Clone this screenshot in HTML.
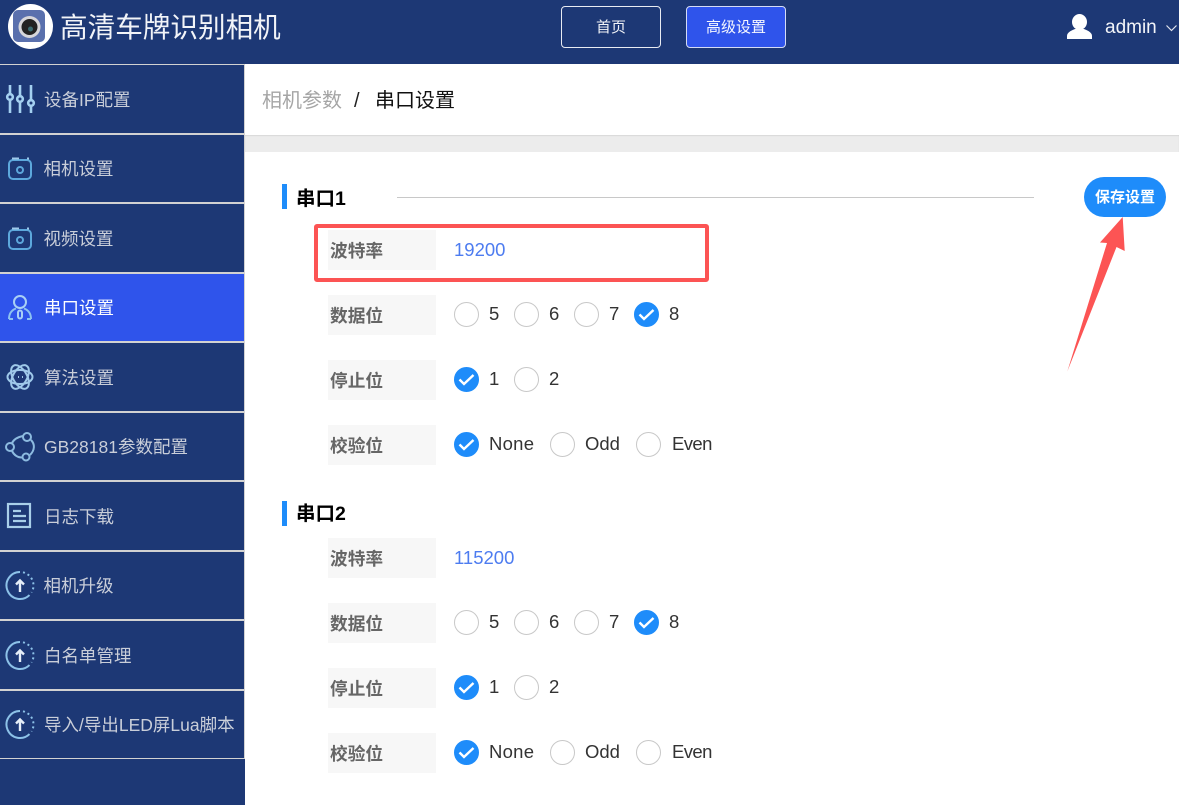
<!DOCTYPE html>
<html lang="zh"><head><meta charset="utf-8"><title>高清车牌识别相机</title>
<style>
html,body{margin:0;padding:0}
*{box-sizing:border-box}
body{width:1179px;height:805px;position:relative;overflow:hidden;background:#fff;font-family:"Liberation Sans","Noto Sans CJK SC",sans-serif}
.a{position:absolute}
.t{position:absolute;white-space:nowrap;line-height:24px}
.ln{position:absolute;left:0;width:244px;height:2px;background:#d2d2d2}
.m{position:absolute;left:44px;font-size:17.5px;line-height:24px;color:#c9ced9;white-space:nowrap}
.ic{position:absolute;left:4px;width:34px;height:34px}
.lb{position:absolute;left:328px;width:108px;height:40px;background:#f7f7f7;font-size:17.7px;font-weight:700;color:#666;line-height:42px;padding-left:2px}
.r{position:absolute;width:25px;height:25px;border-radius:50%;border:1px solid #c8c8c8;background:#fff}
.r.c{background:#1e8cfa;border-color:#1e8cfa}
.r.c svg{position:absolute;left:3px;top:5px;width:17px;height:13px}
.v{position:absolute;font-size:18.5px;line-height:24px;color:#333;white-space:nowrap}
.h{position:absolute;left:296px;font-size:19.5px;font-weight:700;color:#000;line-height:26px}
.bar{position:absolute;left:282px;width:5px;height:25px;background:#1e8cfa}
</style></head><body>
<div class="a" style="left:0;top:0;width:1179px;height:64px;background:#1d3875"></div>
<div class="a" style="left:0;top:64px;width:244px;height:741px;background:#1d3875"></div>
<div class="a" style="left:244px;top:64px;width:1px;height:695px;background:#d2d2d2"></div>
<div class="a" style="left:244px;top:759px;width:1px;height:46px;background:#1d3875"></div>

<svg class="a" style="left:8px;top:4px" width="45" height="45" viewBox="0 0 45 45"><circle cx="22.500" cy="22.500" r="22.500" fill="#fff"/><rect x="5" y="6" width="32" height="32" rx="5" fill="#5a70ad"/><circle cx="21.500" cy="23" r="11" fill="#d6d6da"/><circle cx="21.500" cy="23" r="8" fill="#222"/><circle cx="22.500" cy="25" r="2.500" fill="#3a6a70"/></svg>
<div class="t" style="left:60px;top:11px;font-size:27.6px;line-height:34px;color:#f2f4f8">高清车牌识别相机</div>

<div class="a" style="left:561px;top:6px;width:100px;height:42px;border:1px solid #e8ebf2;border-radius:4px;color:#f2f4f8;font-size:15px;line-height:41px;text-align:center">首页</div>
<div class="a" style="left:686px;top:6px;width:100px;height:42px;border:1px solid #d5dcf5;border-radius:4px;background:#2f54eb;color:#f5f7ff;font-size:15px;line-height:41px;text-align:center">高级设置</div>

<svg class="a" style="left:1066px;top:13px" width="27" height="27" viewBox="0 0 27 27"><ellipse cx="13.500" cy="9" rx="7.500" ry="8" fill="#fff"/><path d="M1 26v-3c0-3 3-5 8-7h9c5 2 8 4 8 7v3z" fill="#fff"/></svg>
<div class="t" style="left:1105px;top:16px;font-size:19px;color:#f2f4f8">admin</div>
<svg class="a" style="left:1165px;top:24px" width="13" height="9" viewBox="0 0 13 9"><path d="M1.500 1.500L6.500 6.500L11.500 1.500" fill="none" stroke="#dfe3ec" stroke-width="1.200"/></svg>

<div class="ln" style="top:64px;height:1px"></div>
<div class="ln" style="top:133px"></div>
<div class="ln" style="top:202px"></div>
<div class="a" style="left:0;top:274px;width:244px;height:67px;background:#2f54eb"></div>
<div class="ln" style="top:272px"></div>
<div class="ln" style="top:341px"></div>
<div class="ln" style="top:411px"></div>
<div class="ln" style="top:480px"></div>
<div class="ln" style="top:550px"></div>
<div class="ln" style="top:619px"></div>
<div class="ln" style="top:689px"></div>
<div class="ln" style="top:758px;height:1px"></div>

<svg class="ic" style="top:82px" viewBox="0 0 34 34" fill="none" stroke="#a4d0f0" stroke-width="2.600"><path d="M6 3v9M6 18v13M16 3v11M16 20v11M27 3v15M27 24v7"/><circle cx="6" cy="15" r="2.800"/><circle cx="16" cy="17" r="2.800"/><circle cx="27" cy="21" r="2.800"/></svg>
<div class="m" style="top:88px">设备IP配置</div>

<svg class="ic" style="top:152px" viewBox="0 0 34 34" fill="none" stroke="#5da8dc" stroke-width="2"><rect x="5" y="8" width="22" height="19" rx="4"/><circle cx="16" cy="18" r="3"/><path d="M8 6.500h7M23 6.500h2" stroke="#9fc9ea"/></svg>
<div class="m" style="top:157px;left:43.500px">相机设置</div>

<svg class="ic" style="top:222px" viewBox="0 0 34 34" fill="none" stroke="#5da8dc" stroke-width="2"><rect x="5" y="8" width="22" height="19" rx="4"/><circle cx="16" cy="18" r="3"/><path d="M8 6.500h7M23 6.500h2" stroke="#9fc9ea"/></svg>
<div class="m" style="top:227px;left:43.500px">视频设置</div>

<svg class="ic" style="top:291px" viewBox="0 0 34 34" fill="none" stroke="#a9d0f5" stroke-width="2"><circle cx="16" cy="11" r="6"/><path d="M5 28c0-6 3-9 7-10.500M27 28c0-6-3-9-7-10.500M5 28h4M23 28h4" stroke="#8dc2f0"/><rect x="14" y="19.500" width="4" height="8" rx="2"/></svg>
<div class="m" style="top:296px;color:#fff">串口设置</div>

<svg class="ic" style="top:360px" viewBox="0 0 34 34" fill="none" stroke="#9fc9ea" stroke-width="2"><ellipse cx="16" cy="17" rx="12.500" ry="7"/><ellipse cx="16" cy="17" rx="13" ry="7" transform="rotate(60 16 17)"/><ellipse cx="16" cy="17" rx="13" ry="7" transform="rotate(-60 16 17)"/><path d="M14 17h1M18 17h1"/></svg>
<div class="m" style="top:366px">算法设置</div>

<svg class="ic" style="top:430px" viewBox="0 0 34 34" fill="none" stroke="#8dbbe0" stroke-width="2"><path d="M8 13C10 9 14 7 19 6M27 10C31 14 31 20 26 25M18.500 27.500C14 28 10 25 8 21"/><circle cx="23" cy="7" r="4"/><circle cx="6" cy="17" r="4"/><circle cx="22" cy="27" r="3.500"/></svg>
<div class="m" style="top:435px">GB28181参数配置</div>

<svg class="ic" style="top:500px" viewBox="0 0 34 34" fill="none" stroke="#a9cfe9" stroke-width="2.200"><rect x="4" y="4" width="22" height="23"/><path d="M9 11h8M9 16h13M9 21h13"/></svg>
<div class="m" style="top:505px">日志下载</div>

<svg class="ic" style="top:569px" viewBox="0 0 34 34" fill="none" stroke="#8dc2e8" stroke-width="2"><path d="M16 3A13.500 13.500 0 1 0 25.500 26.100"/><path d="M19 3.300A13.500 13.500 0 0 1 27.500 23.500" stroke-dasharray="2 3"/><path d="M16 23V11.500M12 15.500l4-4 4 4" stroke="#e6eef8" stroke-width="2.400"/></svg>
<div class="m" style="top:574px;left:43.500px">相机升级</div>

<svg class="ic" style="top:639px" viewBox="0 0 34 34" fill="none" stroke="#8dc2e8" stroke-width="2"><path d="M16 3A13.500 13.500 0 1 0 25.500 26.100"/><path d="M19 3.300A13.500 13.500 0 0 1 27.500 23.500" stroke-dasharray="2 3"/><path d="M16 23V11.500M12 15.500l4-4 4 4" stroke="#e6eef8" stroke-width="2.400"/></svg>
<div class="m" style="top:644px">白名单管理</div>

<svg class="ic" style="top:708px" viewBox="0 0 34 34" fill="none" stroke="#8dc2e8" stroke-width="2"><path d="M16 3A13.500 13.500 0 1 0 25.500 26.100"/><path d="M19 3.300A13.500 13.500 0 0 1 27.500 23.500" stroke-dasharray="2 3"/><path d="M16 23V11.500M12 15.500l4-4 4 4" stroke="#e6eef8" stroke-width="2.400"/></svg>
<div class="m" style="top:713px">导入/导出LED屏Lua脚本</div>

<div class="a" style="left:245px;top:135px;width:934px;height:17px;background:#ececec;box-shadow:inset 0 1px 1px #d8d8d8"></div>
<div class="t" style="left:262px;top:89px;font-size:20px;color:#a5a5a5">相机参数</div>
<div class="t" style="left:354px;top:89px;font-size:20px;color:#222">/</div>
<div class="t" style="left:375px;top:89px;font-size:20px;color:#111">串口设置</div>

<div class="bar" style="top:184px"></div>
<div class="h" style="top:186px">串口1</div>
<div class="a" style="left:397px;top:197px;width:637px;height:1px;background:#c8c8c8"></div>

<div class="a" style="left:1084px;top:177px;width:82px;height:40px;border-radius:20px;background:#1e8cfa;color:#fff;font-size:15px;font-weight:700;line-height:41px;text-align:center">保存设置</div>

<div class="lb" style="top:230px">波特率</div>
<div class="v" style="left:454px;top:238px;color:#4d7cf0">19200</div>
<div class="a" style="left:314px;top:224px;width:395px;height:58px;border:4.500px solid #fc5454;border-radius:3px"></div>

<svg class="a" style="left:1060px;top:210px" width="80" height="170" viewBox="0 0 80 170"><path d="M62.700 7L64.700 41L56.500 37L7.300 161.500L47 33L40 32.500z" fill="#fc5454"/></svg>

<div class="lb" style="top:295px">数据位</div>
<div class="r" style="left:454px;top:302px"></div><div class="v" style="left:489px;top:302px">5</div>
<div class="r" style="left:514px;top:302px"></div><div class="v" style="left:549px;top:302px">6</div>
<div class="r" style="left:574px;top:302px"></div><div class="v" style="left:609px;top:302px">7</div>
<div class="r c" style="left:634px;top:302px"><svg viewBox="0 0 17 13"><path d="M1.500 6.500L6 11L15.500 2" fill="none" stroke="#fff" stroke-width="2.400"/></svg></div><div class="v" style="left:669px;top:302px">8</div>

<div class="lb" style="top:360px">停止位</div>
<div class="r c" style="left:454px;top:367px"><svg viewBox="0 0 17 13"><path d="M1.500 6.500L6 11L15.500 2" fill="none" stroke="#fff" stroke-width="2.400"/></svg></div><div class="v" style="left:489px;top:367px">1</div>
<div class="r" style="left:514px;top:367px"></div><div class="v" style="left:549px;top:367px">2</div>

<div class="lb" style="top:425px">校验位</div>
<div class="r c" style="left:454px;top:432px"><svg viewBox="0 0 17 13"><path d="M1.500 6.500L6 11L15.500 2" fill="none" stroke="#fff" stroke-width="2.400"/></svg></div><div class="v" style="left:489px;top:432px;letter-spacing:.25px">None</div>
<div class="r" style="left:550px;top:432px"></div><div class="v" style="left:585px;top:432px">Odd</div>
<div class="r" style="left:636px;top:432px"></div><div class="v" style="left:672px;top:432px;letter-spacing:-.6px">Even</div>

<div class="bar" style="top:501px"></div>
<div class="h" style="top:501px">串口2</div>

<div class="lb" style="top:538px">波特率</div>
<div class="v" style="left:454px;top:546px;color:#4d7cf0">115200</div>

<div class="lb" style="top:603px">数据位</div>
<div class="r" style="left:454px;top:610px"></div><div class="v" style="left:489px;top:610px">5</div>
<div class="r" style="left:514px;top:610px"></div><div class="v" style="left:549px;top:610px">6</div>
<div class="r" style="left:574px;top:610px"></div><div class="v" style="left:609px;top:610px">7</div>
<div class="r c" style="left:634px;top:610px"><svg viewBox="0 0 17 13"><path d="M1.500 6.500L6 11L15.500 2" fill="none" stroke="#fff" stroke-width="2.400"/></svg></div><div class="v" style="left:669px;top:610px">8</div>

<div class="lb" style="top:668px">停止位</div>
<div class="r c" style="left:454px;top:675px"><svg viewBox="0 0 17 13"><path d="M1.500 6.500L6 11L15.500 2" fill="none" stroke="#fff" stroke-width="2.400"/></svg></div><div class="v" style="left:489px;top:675px">1</div>
<div class="r" style="left:514px;top:675px"></div><div class="v" style="left:549px;top:675px">2</div>

<div class="lb" style="top:733px">校验位</div>
<div class="r c" style="left:454px;top:740px"><svg viewBox="0 0 17 13"><path d="M1.500 6.500L6 11L15.500 2" fill="none" stroke="#fff" stroke-width="2.400"/></svg></div><div class="v" style="left:489px;top:740px;letter-spacing:.25px">None</div>
<div class="r" style="left:550px;top:740px"></div><div class="v" style="left:585px;top:740px">Odd</div>
<div class="r" style="left:636px;top:740px"></div><div class="v" style="left:672px;top:740px;letter-spacing:-.6px">Even</div>
</body></html>
